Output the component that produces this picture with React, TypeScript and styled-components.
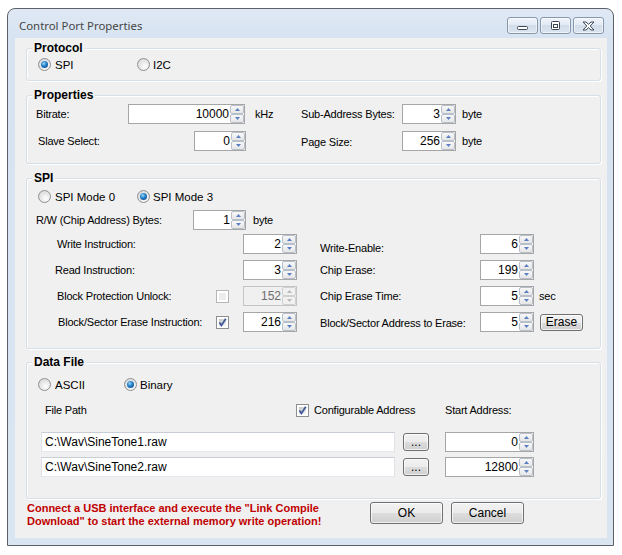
import React from "react";
import styled, { createGlobalStyle } from "styled-components";

const Global = createGlobalStyle`
  html, body { margin: 0; padding: 0; background: #ffffff; }
  body { font-family: "Liberation Sans", Arial, sans-serif; font-size: 11px; color: #000; }
`;

const Page = styled.div`
  width: 622px;
  height: 555px;
  box-sizing: border-box;
  padding: 8px 0 0 7px;
  background: #fff;
`;

const Window = styled.div`
  width: 607px;
  height: 538px;
  box-sizing: border-box;
  border: 1px solid #5b6069;
  border-radius: 8px 8px 0 0;
  background: linear-gradient(#dfe9f5, #d7e3f1 30px, #dae5f2);
  display: flex;
  flex-direction: column;
  padding: 0 6px 7px 7px;
`;

const TitleBar = styled.div`
  height: 29px;
  flex: none;
  display: flex;
  align-items: flex-start;
  justify-content: space-between;
  padding: 8px 3px 0 4px;
  box-sizing: border-box;
`;

const TitleText = styled.span`
  font-family: "Noto Sans", "Open Sans", sans-serif;
  font-size: 11.4px;
  line-height: 17px;
  color: #454545;
`;

const TitleButtons = styled.div`
  display: flex;
  gap: 2px;
`;

const TitleBtn = styled.div`
  width: 31px;
  height: 17px;
  box-sizing: border-box;
  border: 1px solid #8797ab;
  border-radius: 3px;
  background: linear-gradient(#f1f5fa, #e1e9f3 50%, #d2dde9 50%, #dbe5f0);
  box-shadow: inset 0 0 0 1px rgba(255, 255, 255, 0.55);
  display: flex;
  align-items: center;
  justify-content: center;
`;

const Client = styled.div`
  flex: 1;
  background: #f0f0f0;
  display: flex;
  flex-direction: column;
  padding: 10px 6px 0 11px;
  box-sizing: border-box;
`;

const Group = styled.div<{ $h: number; $mt?: number; $pt: number }>`
  position: relative;
  height: ${(p) => p.$h}px;
  flex: none;
  box-sizing: border-box;
  margin-top: ${(p) => p.$mt ?? 0}px;
  border: 1px solid #d5dfe5;
  border-radius: 3px;
  box-shadow: inset 1px 1px 0 #ffffff, 1px 1px 0 #ffffff;
  padding-top: ${(p) => p.$pt}px;
`;

const GroupTitle = styled.span`
  position: absolute;
  top: -8px;
  left: 5px;
  padding: 0 2px;
  background: #f0f0f0;
  font-weight: bold;
  font-size: 12px;
  line-height: 14px;
  color: #000;
`;

const Row = styled.div<{ $indent?: number; $mt?: number; $h?: number }>`
  display: flex;
  align-items: center;
  padding-left: ${(p) => p.$indent ?? 0}px;
  margin-top: ${(p) => p.$mt ?? 0}px;
  height: ${(p) => p.$h ?? 20}px;
`;

const Label = styled.span<{ $w?: number; $shift?: number }>`
  flex: none;
  width: ${(p) => (p.$w ? `${p.$w}px` : "auto")};
  white-space: nowrap;
  font-size: 11px;
  letter-spacing: -0.2px;
  padding-top: ${(p) => (p.$shift ?? 0) * 2}px;
`;

const Unit = styled.span<{ $ml?: number; $w?: number }>`
  flex: none;
  margin-left: ${(p) => p.$ml ?? 0}px;
  width: ${(p) => (p.$w ? `${p.$w}px` : "auto")};
  white-space: nowrap;
  font-size: 11px;
  letter-spacing: -0.2px;
`;

const RadioOpt = styled.label<{ $w: number; $gap?: number }>`
  display: flex;
  align-items: center;
  gap: ${(p) => p.$gap ?? 4}px;
  width: ${(p) => p.$w}px;
  flex: none;
  font-size: 11.5px;
`;

const RadioDot = styled.span<{ $on?: boolean }>`
  width: 13px;
  height: 13px;
  box-sizing: border-box;
  border-radius: 50%;
  border: 1px solid #8f9094;
  background: radial-gradient(circle at 62% 68%, #ffffff 0, #eeeeee 35%, #cfd0d2 100%);
  display: inline-flex;
  align-items: center;
  justify-content: center;
  flex: none;
  &::after {
    content: "";
    display: ${(p) => (p.$on ? "block" : "none")};
    width: 7px;
    height: 7px;
    border-radius: 50%;
    background: radial-gradient(circle at 40% 35%, #9ad8fb 0, #1f7cc4 45%, #0a3f73 100%);
  }
`;

const CheckBox = styled.span<{ $disabled?: boolean }>`
  width: 13px;
  height: 13px;
  box-sizing: border-box;
  flex: none;
  border: 1px solid ${(p) => (p.$disabled ? "#b5b5b5" : "#8e8f8f")};
  background: #ffffff;
  padding: 2px;
  display: inline-flex;
  position: relative;
  & > span {
    flex: 1;
    background: ${(p) =>
      p.$disabled ? "#ececec" : "linear-gradient(135deg, #c4c4c4, #e8e8e8 70%, #f8f8f8)"};
  }
  & svg {
    position: absolute;
    left: 0;
    top: 0;
  }
`;

const CheckSlot = styled.span<{ $w: number }>`
  flex: none;
  width: ${(p) => p.$w}px;
  display: flex;
  align-items: center;
`;

const SpinWrap = styled.div<{ $w: number; $disabled?: boolean; $ml?: number }>`
  width: ${(p) => p.$w}px;
  height: 20px;
  flex: none;
  box-sizing: border-box;
  margin-left: ${(p) => p.$ml ?? 0}px;
  display: flex;
  border: 1px solid ${(p) => (p.$disabled ? "#c4c4c4" : "#a6a6a6")};
  background: ${(p) => (p.$disabled ? "#f0f0f0" : "#ffffff")};
  color: ${(p) => (p.$disabled ? "#6d6d6d" : "#000")};
`;

const SpinValue = styled.span`
  flex: 1;
  text-align: right;
  line-height: 18px;
  font-size: 12px;
  padding-right: 1px;
  white-space: nowrap;
`;

const SpinCol = styled.div`
  width: 14px;
  display: flex;
  flex-direction: column;
  flex: none;
`;

const SpinBtn = styled.div<{ $disabled?: boolean }>`
  flex: 1;
  box-sizing: border-box;
  border: 1px solid ${(p) => (p.$disabled ? "#d0d0d0" : "#b7bfcb")};
  border-radius: 2px;
  background: ${(p) =>
    p.$disabled ? "#f1f1f1" : "linear-gradient(#f8f8f8, #e6e6e6)"};
  display: flex;
  align-items: center;
  justify-content: center;
`;

const TextBox = styled.div<{ $w: number }>`
  width: ${(p) => p.$w}px;
  height: 20px;
  flex: none;
  box-sizing: border-box;
  border: 1px solid #a6a6a6;
  border-color: #c9ced6 #dfe3e8 #e3e9ef #dfe3e8;
  background: #fff;
  font-size: 12px;
  line-height: 18px;
  padding-left: 3px;
  white-space: nowrap;
`;

const Btn = styled.button<{ $w: number; $h: number; $ml?: number }>`
  width: ${(p) => p.$w}px;
  height: ${(p) => p.$h}px;
  margin-left: ${(p) => p.$ml ?? 0}px;
  flex: none;
  box-sizing: border-box;
  padding: 0;
  border: 1px solid #707070;
  border-radius: 3px;
  background: linear-gradient(#f2f2f2 0, #ebebeb 50%, #dddddd 50%, #cfcfcf 100%);
  box-shadow: inset 0 0 0 1px rgba(255, 255, 255, 0.7);
  font-family: "Liberation Sans", Arial, sans-serif;
  font-size: 12px;
  color: #000;
  line-height: 1;
`;

const Bottom = styled.div`
  display: flex;
  align-items: flex-start;
  margin-top: 3px;
  padding-left: 1px;
`;

const Warning = styled.div`
  width: 343px;
  flex: none;
  color: #c00000;
  font-weight: bold;
  font-size: 11px;
  line-height: 13px;
  white-space: nowrap;
`;

const Arrow = ({ up, disabled }: { up?: boolean; disabled?: boolean }) => (
  <svg width="5" height="3" viewBox="0 0 5 3">
    <path
      d={up ? "M0 3 L2.5 0 L5 3 Z" : "M0 0 L5 0 L2.5 3 Z"}
      fill={disabled ? "#b8b8b8" : "#5b7fc2"}
    />
  </svg>
);

const Spin = ({
  w,
  value,
  disabled,
  ml,
}: {
  w: number;
  value: string;
  disabled?: boolean;
  ml?: number;
}) => (
  <SpinWrap $w={w} $disabled={disabled} $ml={ml}>
    <SpinValue>{value}</SpinValue>
    <SpinCol>
      <SpinBtn $disabled={disabled}>
        <Arrow up disabled={disabled} />
      </SpinBtn>
      <SpinBtn $disabled={disabled}>
        <Arrow disabled={disabled} />
      </SpinBtn>
    </SpinCol>
  </SpinWrap>
);

const Check = ({ checked, disabled }: { checked?: boolean; disabled?: boolean }) => (
  <CheckBox $disabled={disabled}>
    <span />
    {checked && (
      <svg width="11" height="11" viewBox="0 0 11 11">
        <path d="M2.4 5.4 L4.4 8.3 L8.8 1.8" fill="none" stroke="#42599a" strokeWidth="1.8" />
      </svg>
    )}
  </CheckBox>
);

const Radio = ({
  on,
  label,
  w,
  gap,
}: {
  on?: boolean;
  label: string;
  w: number;
  gap?: number;
}) => (
  <RadioOpt $w={w} $gap={gap}>
    <RadioDot $on={on} />
    <span>{label}</span>
  </RadioOpt>
);

export default function App() {
  return (
    <>
      <Global />
      <Page>
        <Window>
          <TitleBar>
            <TitleText>Control Port Properties</TitleText>
            <TitleButtons>
              <TitleBtn>
                <svg width="13" height="9" viewBox="0 0 13 9">
                  <rect x="1.5" y="5.5" width="10" height="3" rx="1" fill="#fff" stroke="#3d4654" />
                </svg>
              </TitleBtn>
              <TitleBtn>
                <svg width="11" height="9" viewBox="0 0 11 9">
                  <rect x="1.5" y="0.5" width="8" height="8" rx="1" fill="#fff" stroke="#3d4654" />
                  <rect x="3.5" y="3.5" width="4" height="3" fill="#fff" stroke="#3d4654" />
                </svg>
              </TitleBtn>
              <TitleBtn>
                <svg width="13" height="10" viewBox="0 0 13 10">
                  <path
                    d="M1 1 L4 1 L6.5 3.3 L9 1 L12 1 L8.2 5 L12 9 L9 9 L6.5 6.7 L4 9 L1 9 L4.8 5 Z"
                    fill="#fff"
                    stroke="#3d4654"
                    strokeWidth="1"
                    strokeLinejoin="round"
                  />
                </svg>
              </TitleBtn>
            </TitleButtons>
          </TitleBar>
          <Client>
            <Group $h={33} $pt={9}>
              <GroupTitle>Protocol</GroupTitle>
              <Row $indent={11} $h={13}>
                <Radio on label="SPI" w={99} />
                <Radio label="I2C" w={60} gap={3} />
              </Row>
            </Group>

            <Group $h={69} $mt={14} $pt={8}>
              <GroupTitle>Properties</GroupTitle>
              <Row $indent={9}>
                <Label $w={92}>Bitrate:</Label>
                <Spin w={117} value="10000" />
                <Unit $ml={10} $w={46}>kHz</Unit>
                <Label $w={101}>Sub-Address Bytes:</Label>
                <Spin w={54} value="3" />
                <Unit $ml={6}>byte</Unit>
              </Row>
              <Row $indent={11} $mt={7}>
                <Label $w={156}>Slave Select:</Label>
                <Spin w={52} value="0" />
                <Unit $w={55} />
                <Label $w={101} $shift={1}>Page Size:</Label>
                <Spin w={54} value="256" />
                <Unit $ml={6}>byte</Unit>
              </Row>
            </Group>

            <Group $h={171} $mt={14} $pt={11}>
              <GroupTitle>SPI</GroupTitle>
              <Row $indent={11} $h={13}>
                <Radio label="SPI Mode 0" w={99} />
                <Radio on label="SPI Mode 3" w={100} gap={3} />
              </Row>
              <Row $indent={9} $mt={7}>
                <Label $w={157}>R/W (Chip Address) Bytes:</Label>
                <Spin w={53} value="1" />
                <Unit $ml={7}>byte</Unit>
              </Row>
              <Row $indent={30} $mt={4}>
                <Label $w={186}>Write Instruction:</Label>
                <Spin w={54} value="2" />
                <Unit $w={23} />
                <Label $w={160} $shift={4}>Write-Enable:</Label>
                <Spin w={54} value="6" />
              </Row>
              <Row $indent={28} $mt={6}>
                <Label $w={188}>Read Instruction:</Label>
                <Spin w={54} value="3" />
                <Unit $w={23} />
                <Label $w={160}>Chip Erase:</Label>
                <Spin w={54} value="199" />
              </Row>
              <Row $indent={30} $mt={6}>
                <Label $w={159}>Block Protection Unlock:</Label>
                <CheckSlot $w={27}>
                  <Check disabled />
                </CheckSlot>
                <Spin w={54} value="152" disabled />
                <Unit $w={23} />
                <Label $w={160}>Chip Erase Time:</Label>
                <Spin w={54} value="5" />
                <Unit $ml={5}>sec</Unit>
              </Row>
              <Row $indent={31} $mt={6}>
                <Label $w={158}>Block/Sector Erase Instruction:</Label>
                <CheckSlot $w={27}>
                  <Check checked />
                </CheckSlot>
                <Spin w={54} value="216" />
                <Unit $w={23} />
                <Label $w={160} $shift={1}>Block/Sector Address to Erase:</Label>
                <Spin w={54} value="5" />
                <Btn $w={43} $h={17} $ml={6}>Erase</Btn>
              </Row>
            </Group>

            <Group $h={137} $mt={13} $pt={15}>
              <GroupTitle>Data File</GroupTitle>
              <Row $indent={11} $h={13}>
                <Radio label="ASCII" w={86} />
                <Radio on label="Binary" w={80} gap={3} />
              </Row>
              <Row $indent={18} $mt={12} $h={14}>
                <Label $w={251}>File Path</Label>
                <CheckSlot $w={149}>
                  <Check checked />
                  <Unit $ml={5}>Configurable Address</Unit>
                </CheckSlot>
                <Label>Start Address:</Label>
              </Row>
              <Row $indent={14} $mt={15}>
                <TextBox $w={354}>C:\Wav\SineTone1.raw</TextBox>
                <Btn $w={26} $h={18} $ml={8}>...</Btn>
                <Spin w={89} value="0" ml={16} />
              </Row>
              <Row $indent={14} $mt={5}>
                <TextBox $w={354}>C:\Wav\SineTone2.raw</TextBox>
                <Btn $w={26} $h={18} $ml={8}>...</Btn>
                <Spin w={89} value="12800" ml={16} />
              </Row>
            </Group>

            <Bottom>
              <Warning>
                Connect a USB interface and execute the "Link Compile
                <br />
                Download" to start the external memory write operation!
              </Warning>
              <Btn $w={73} $h={22}>OK</Btn>
              <Btn $w={73} $h={22} $ml={8}>Cancel</Btn>
            </Bottom>
          </Client>
        </Window>
      </Page>
    </>
  );
}
